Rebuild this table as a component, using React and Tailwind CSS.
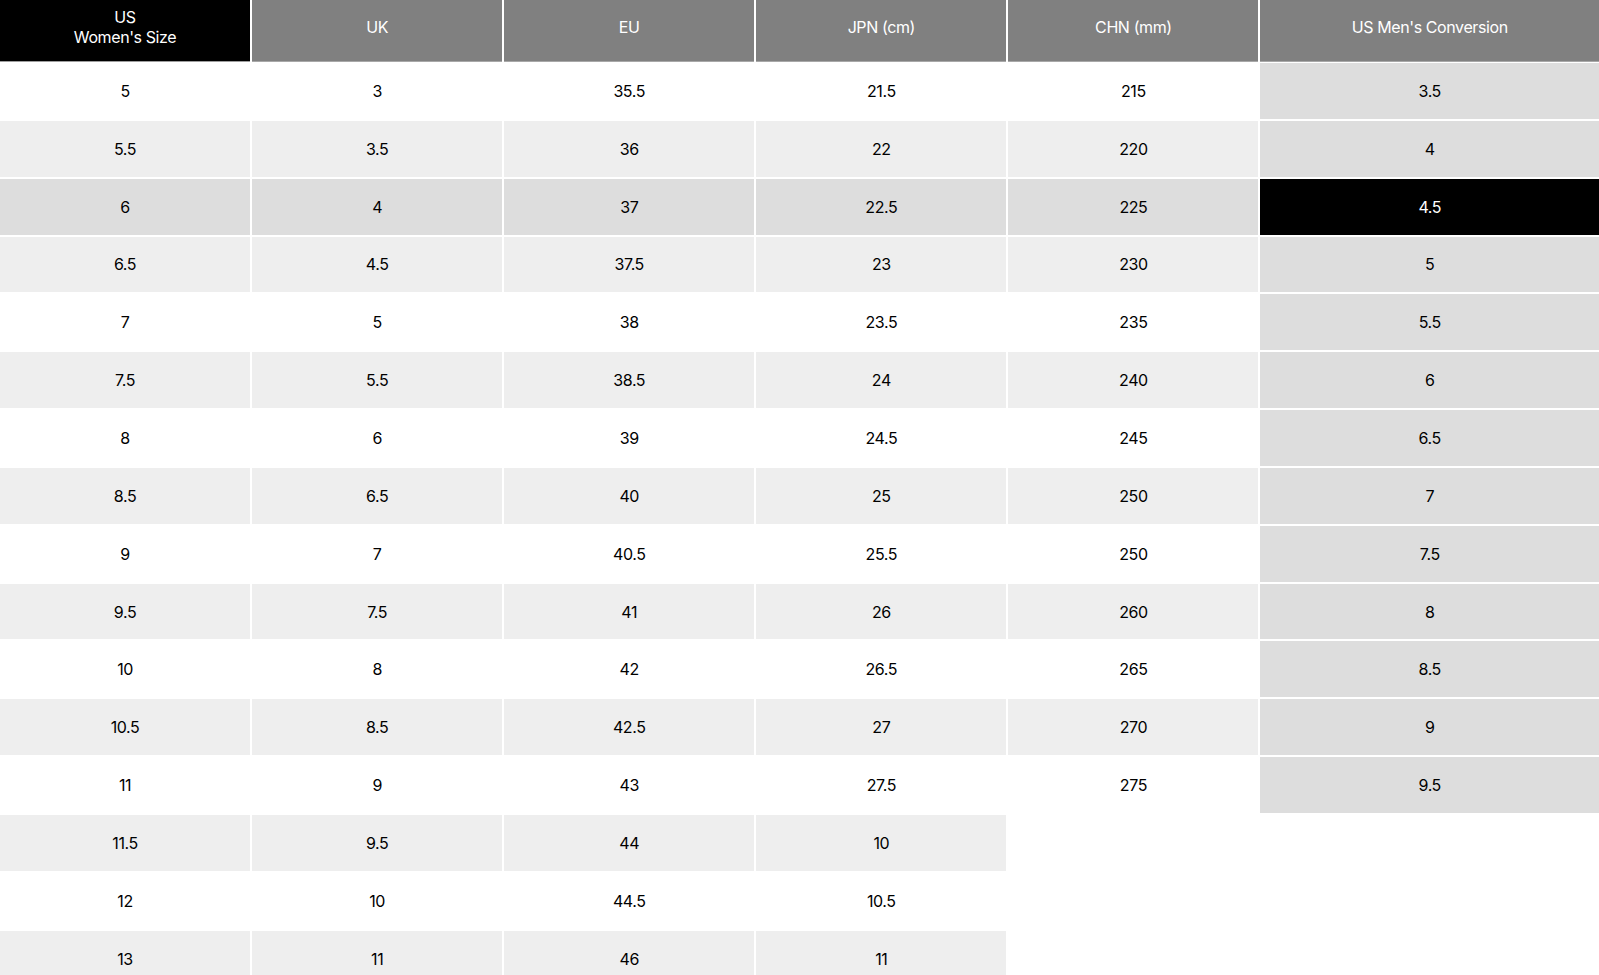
import React from "react";

const headers = ["UK", "EU", "JPN (cm)", "CHN (mm)", "US Men's Conversion"];

const us = ["5", "5.5", "6", "6.5", "7", "7.5", "8", "8.5", "9", "9.5", "10", "10.5", "11", "11.5", "12", "13"];
const uk = ["3", "3.5", "4", "4.5", "5", "5.5", "6", "6.5", "7", "7.5", "8", "8.5", "9", "9.5", "10", "11"];
const eu = ["35.5", "36", "37", "37.5", "38", "38.5", "39", "40", "40.5", "41", "42", "42.5", "43", "44", "44.5", "46"];
const jpn = ["21.5", "22", "22.5", "23", "23.5", "24", "24.5", "25", "25.5", "26", "26.5", "27", "27.5", "10", "10.5", "11"];
const chn = ["215", "220", "225", "230", "235", "240", "245", "250", "250", "260", "265", "270", "275"];
const men = ["3.5", "4", "4.5", "5", "5.5", "6", "6.5", "7", "7.5", "8", "8.5", "9", "9.5"];

const rowBg = (i) => {
  if (i === 2) return "bg-[#dddddd]";
  return i % 2 === 0 ? "bg-white" : "bg-[#eeeeee]";
};

const Cell = ({ className, children }) => (
  <div className={`h-[55.85px] flex items-center justify-center text-[16px] text-black ${className}`}>
    {children}
  </div>
);

const App = () => {
  return (
    <div className="h-screen w-full overflow-hidden bg-white font-['Inter',sans-serif] tracking-[-0.4px]">
      <div className="grid grid-cols-[repeat(5,250.1px)_1fr] gap-x-[2px] gap-y-[2px]">
        <div className="h-[61px] pb-[8px] bg-black text-white text-[16px] leading-[20px] flex flex-col items-center justify-center shadow-[0_1px_0_#9e9e9e]">
          <span>US</span>
          <span>Women's Size</span>
        </div>
        {headers.map((h) => (
          <div
            key={h}
            className="h-[61px] pb-[8px] bg-[#808080] text-white text-[16px] flex items-center justify-center shadow-[0_1px_0_#a8a8a8]"
          >
            {h}
          </div>
        ))}

        {us.map((v, i) => (
          <React.Fragment key={i}>
            <Cell className={rowBg(i)}>{v}</Cell>
            <Cell className={rowBg(i)}>{uk[i]}</Cell>
            <Cell className={rowBg(i)}>{eu[i]}</Cell>
            <Cell className={rowBg(i)}>{jpn[i]}</Cell>
            {i < chn.length ? (
              <Cell className={rowBg(i)}>{chn[i]}</Cell>
            ) : (
              <div className="h-[55.85px] bg-white" />
            )}
            {i < men.length ? (
              <Cell className={i === 2 ? "bg-black !text-white" : "bg-[#dddddd]"}>{men[i]}</Cell>
            ) : (
              <div className="h-[55.85px] bg-white" />
            )}
          </React.Fragment>
        ))}
      </div>
    </div>
  );
};

export default App;
